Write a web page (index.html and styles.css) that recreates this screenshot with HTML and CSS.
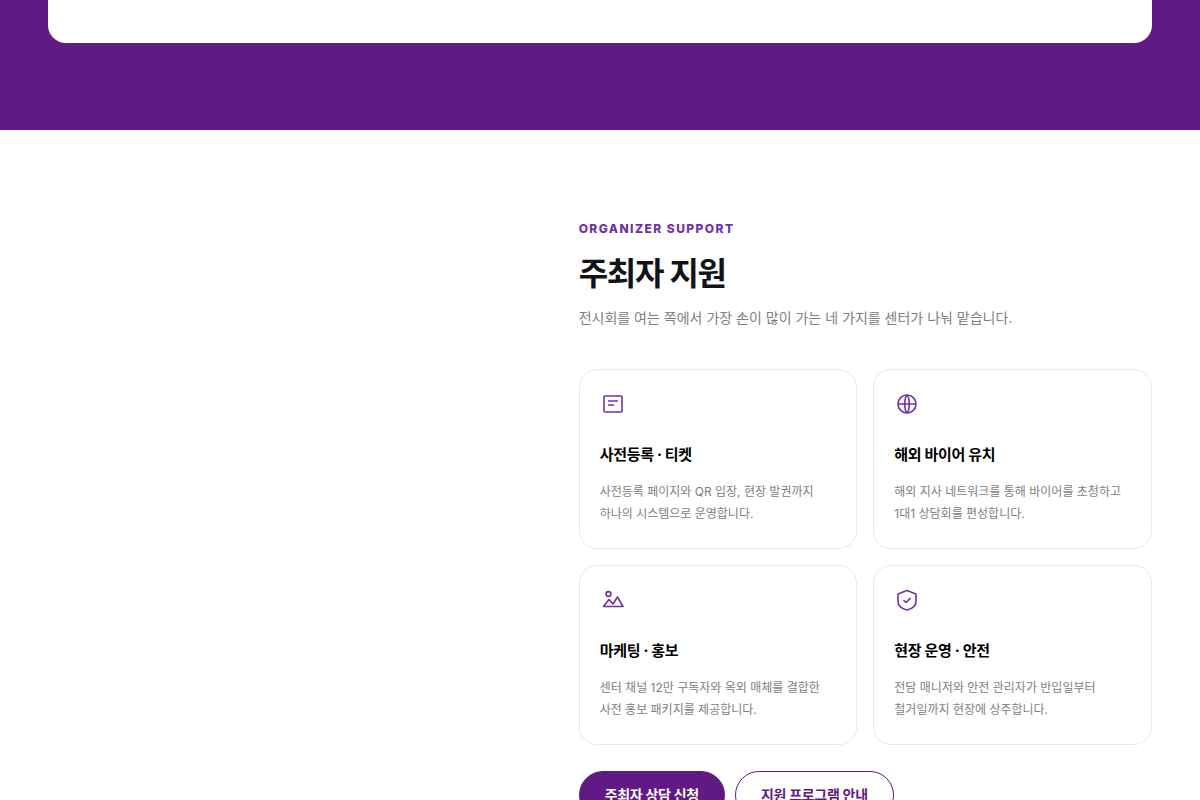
FILE: index.html
```html
<!DOCTYPE html>
<html lang="ko">
<head>
<meta charset="utf-8">
<meta name="viewport" content="width=device-width, initial-scale=1">
<title>주최자 지원</title>
<link rel="stylesheet" href="styles.css">
</head>
<body>
<section class="band">
  <div class="band-panel"></div>
</section>
<main class="support">
  <div class="support-media"></div>
  <div class="support-body">
    <p class="eyebrow">ORGANIZER SUPPORT</p>
    <h2 class="heading">주최자 지원</h2>
    <p class="lead">전시회를 여는 쪽에서 가장 손이 많이 가는 네 가지를 센터가 나눠 맡습니다.</p>
    <div class="cards">
      <article class="card">
        <svg class="icon" viewBox="0 0 26 26" aria-hidden="true"><rect x="4" y="5" width="18" height="16" rx="1"/><path d="M8 10h10M8 14h6"/></svg>
        <h3 class="card-title">사전등록 · 티켓</h3>
        <p class="card-text">사전등록 페이지와 QR 입장, 현장 발권까지<br>하나의 시스템으로 운영합니다.</p>
      </article>
      <article class="card">
        <svg class="icon" viewBox="0 0 26 26" aria-hidden="true"><circle cx="13" cy="13" r="9"/><path d="M4 13h18M13 4c3 3 3 15 0 18M13 4c-3 3-3 15 0 18"/></svg>
        <h3 class="card-title">해외 바이어 유치</h3>
        <p class="card-text">해외 지사 네트워크를 통해 바이어를 초청하고<br>1대1 상담회를 편성합니다.</p>
      </article>
      <article class="card">
        <svg class="icon" viewBox="0 0 26 26" aria-hidden="true"><path d="M3.500 19.500l5.500-7 4 4.500 4.500-7 5.500 9.500z"/><circle cx="8.500" cy="7" r="2.400"/></svg>
        <h3 class="card-title">마케팅 · 홍보</h3>
        <p class="card-text">센터 채널 12만 구독자와 옥외 매체를 결합한<br>사전 홍보 패키지를 제공합니다.</p>
      </article>
      <article class="card">
        <svg class="icon" viewBox="0 0 26 26" aria-hidden="true"><path d="M13 3.500l9 3.500v7c0 5-4 8-9 9-5-1-9-4-9-9V7z"/><path d="M9.500 13l2.500 2.500 4.500-4.500"/></svg>
        <h3 class="card-title">현장 운영 · 안전</h3>
        <p class="card-text">전담 매니저와 안전 관리자가 반입일부터<br>철거일까지 현장에 상주합니다.</p>
      </article>
    </div>
    <div class="actions">
      <button class="btn btn-primary" type="button">주최자 상담 신청</button>
      <button class="btn btn-outline" type="button">지원 프로그램 안내</button>
    </div>
  </div>
</main>
</body>
</html>
```
FILE: styles.css
```css
* { box-sizing: border-box; }

body {
  margin: 0;
  background: #fff;
  color: #111318;
  font-family: Inter, "Noto Sans CJK KR", sans-serif;
}

h2, h3, p { margin: 0; }

.band {
  padding: 0 48px 87px;
  background: #611985;
}

.band-panel {
  height: 43px;
  background: #fff;
  border-radius: 0 0 18px 18px;
}

.support {
  display: grid;
  grid-template-columns: 4fr 5fr;
  gap: 72px;
  padding: 90px 48px;
}

.eyebrow {
  color: #7030a8;
  font-size: 12px;
  font-weight: 800;
  line-height: 18px;
  letter-spacing: 0.12em;
}

.heading {
  margin-top: 12px;
  font-size: 32px;
  font-weight: 700;
  line-height: 48px;
  letter-spacing: -0.04em;
}

.lead {
  margin-top: 8px;
  color: #808080;
  font-size: 14px;
  font-weight: 400;
  line-height: 23px;
}

.cards {
  display: grid;
  grid-template-columns: 1fr 1fr;
  gap: 16px;
  margin-top: 40px;
}

.card {
  padding: 21px 20px 23px;
  border: 1px solid #e8e8ea;
  border-radius: 18px;
}

.icon {
  display: block;
  width: 26px;
  height: 26px;
  fill: none;
  stroke: #7030a8;
  stroke-width: 1.6;
  stroke-linejoin: round;
}

.card-title {
  margin-top: 25px;
  color: #000;
  font-size: 15px;
  font-weight: 700;
  line-height: 26px;
  letter-spacing: -0.02em;
}

.card-text {
  margin-top: 13px;
  color: #808080;
  font-size: 12px;
  font-weight: 400;
  line-height: 22px;
}

.actions {
  display: flex;
  gap: 10px;
  margin-top: 26px;
}

.btn {
  padding: 12px 25px;
  border: 1px solid #611985;
  border-radius: 24px;
  font: inherit;
  font-size: 14px;
  font-weight: 700;
  line-height: 22px;
  letter-spacing: -0.02em;
}

.btn-primary { background: #611985; color: #fff; }
.btn-outline { background: #fff; color: #611985; }
```
